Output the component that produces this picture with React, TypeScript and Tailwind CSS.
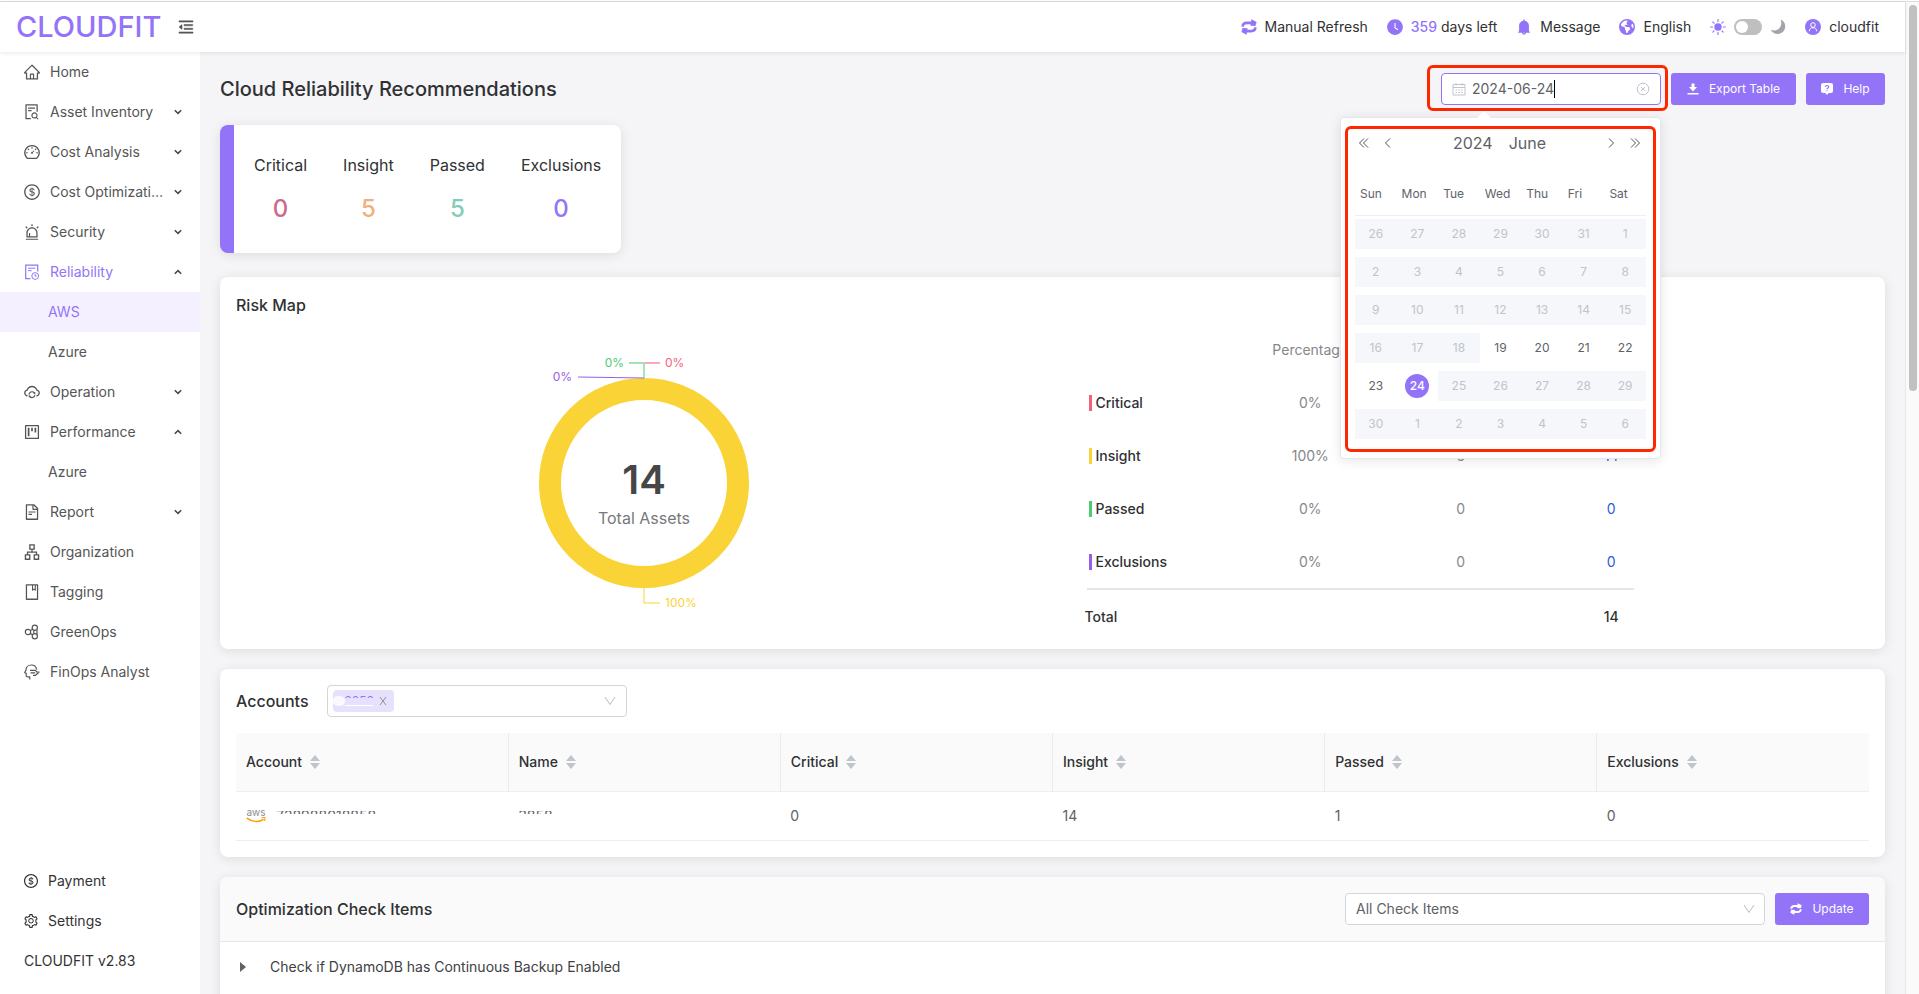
import type { ReactNode } from "react";
import {
  AiFillBell,
  AiFillClockCircle,
  AiOutlineAlert,
  AiOutlineApartment,
  AiOutlineBook,
  AiOutlineCloudSync,
  AiOutlineDashboard,
  AiOutlineDollarCircle,
  AiOutlineFileSearch,
  AiOutlineFileText,
  AiOutlineHome,
  AiOutlineMenuFold,
  AiOutlineProject,
  AiOutlineSetting,
} from "react-icons/ai";
import { FaEarthAmericas } from "react-icons/fa6";

type IconProps = { className?: string };

function RefreshIcon({ className }: IconProps) {
  return (
    <svg viewBox="0 0 16 16" className={className} fill="none" aria-hidden>
      <path
        d="M1.6 7.6C1.8 4.8 3.6 3.9 5.8 3.9H11"
        stroke="currentColor"
        strokeWidth="2.6"
      />
      <path d="M10.4 0.2 15.6 3 14.4 6.9 9.4 6.7z" fill="currentColor" />
      <path
        d="M14.4 8.4c-.2 2.8-2 3.7-4.2 3.7H5"
        stroke="currentColor"
        strokeWidth="2.6"
      />
      <path d="M5.6 15.8.4 13 1.6 9.1 6.6 9.3z" fill="currentColor" />
    </svg>
  );
}

function SunIcon() {
  return (
    <svg viewBox="0 0 16 16" className="size-4 text-[#9374f8]" aria-hidden>
      <circle cx="8" cy="8" r="3.7" fill="currentColor" />
      <path
        d="M8 .6v2M8 13.4v2M.6 8h2M13.4 8h2M2.8 2.8l1.3 1.3M11.9 11.9l1.3 1.3M2.8 13.2l1.3-1.3M11.9 4.1l1.3-1.3"
        stroke="currentColor"
        strokeWidth="1.2"
        strokeLinecap="round"
      />
    </svg>
  );
}

function MoonIcon() {
  return (
    <svg viewBox="0 0 16 16" className="size-4 text-[#a3a3ab]" aria-hidden>
      <path
        d="M10.6.6c2.6 1 4.6 3.4 4.6 6.6 0 4.4-3.4 7.8-7.6 7.8-3 0-5.6-1.6-6.9-4.2 1 .5 2.2.7 3.4.7 4 0 7.2-3.2 7.2-7.2 0-1.3-.2-2.6-.7-3.7z"
        fill="currentColor"
      />
    </svg>
  );
}

function UserIcon() {
  return (
    <svg viewBox="0 0 16 16" className="size-4" fill="none" aria-hidden>
      <circle cx="8" cy="8" r="8" fill="#9374f8" />
      <circle cx="8" cy="6" r="2.3" stroke="#fff" />
      <path d="M4.3 12.2c.2-2.3 1.7-3.6 3.7-3.6s3.5 1.3 3.7 3.6" stroke="#fff" />
    </svg>
  );
}

function FileClockIcon({ className }: IconProps) {
  return (
    <svg
      viewBox="-1 -1 18 18"
      className={className}
      fill="none"
      stroke="currentColor"
      aria-hidden
    >
      <path d="M6.5 14.7H1.7V1.2h12v6.3" strokeWidth="1.2" />
      <path d="M4 4.2h7.3M4 6.7h3.7" />
      <circle cx="11.2" cy="12" r="3.4" />
      <path d="M11.2 10v2.2h1.5" />
    </svg>
  );
}

function MoleculeIcon({ className }: IconProps) {
  return (
    <svg
      viewBox="-1 -1 18 18"
      className={className}
      fill="none"
      stroke="currentColor"
      strokeWidth="1.2"
      aria-hidden
    >
      <circle cx="4" cy="8" r="2.7" />
      <circle cx="10.8" cy="3.7" r="2.6" />
      <circle cx="10.8" cy="12.3" r="2.6" />
      <path d="M6.3 6.6 8.6 5.2M6.3 9.4l2.3 1.4M10.3 6.3c-1 1.2-1 2.3 0 3.4M13 5.2v5.6" />
    </svg>
  );
}

function AnalystIcon({ className }: IconProps) {
  return (
    <svg
      viewBox="-1 -1 18 18"
      className={className}
      fill="none"
      stroke="currentColor"
      strokeWidth="1.2"
      strokeLinejoin="round"
      aria-hidden
    >
      <path d="M12.6 5.6C12.3 2.9 10.2 1 7.3 1 4.3 1 2 3.2 2 6L.7 8.6l1.5.7v2.3c0 .8.5 1.2 1.2 1.2h2.4v2.7" />
      <path d="M6 6.3h5.3l1.7 1.9h2.5M6.5 8.8h4.7M9 11.3h2.6l1.6-1.7h1.3" />
    </svg>
  );
}

function ChevronIcon({ open = false }: { open?: boolean }) {
  return (
    <svg viewBox="0 0 8 6" className="h-1.5 w-2" fill="none" aria-hidden>
      <path
        d={open ? "M.8 4.8 4 1.6l3.2 3.2" : "M.8 1.2 4 4.4l3.2-3.2"}
        stroke="#4a4a4a"
        strokeWidth="1.6"
      />
    </svg>
  );
}

function SelectArrow() {
  return (
    <svg
      viewBox="0 0 12 10"
      className="pointer-events-none absolute right-2.5 top-1/2 h-2.5 w-3 -translate-y-1/2"
      fill="none"
      aria-hidden
    >
      <path d="M1 1l5 7.5L11 1" stroke="#b8bbc2" />
    </svg>
  );
}

function SortIcon() {
  return (
    <svg viewBox="0 0 10 14" className="h-3.5 w-2.5" fill="#c0c4cc" aria-hidden>
      <path d="M5 0l5 6H0zM5 14l5-6H0z" />
    </svg>
  );
}

const menu = [
  { label: "Home", icon: AiOutlineHome },
  { label: "Asset Inventory", icon: AiOutlineFileSearch, sub: [] },
  { label: "Cost Analysis", icon: AiOutlineDashboard, sub: [] },
  { label: "Cost Optimizati…", icon: AiOutlineDollarCircle, sub: [] },
  { label: "Security", icon: AiOutlineAlert, sub: [] },
  { label: "Reliability", icon: FileClockIcon, sub: ["AWS", "Azure"], active: true },
  { label: "Operation", icon: AiOutlineCloudSync, sub: [] },
  { label: "Performance", icon: AiOutlineProject, sub: ["Azure"] },
  { label: "Report", icon: AiOutlineFileText, sub: [] },
  { label: "Organization", icon: AiOutlineApartment },
  { label: "Tagging", icon: AiOutlineBook },
  { label: "GreenOps", icon: MoleculeIcon },
  { label: "FinOps Analyst", icon: AnalystIcon },
];

function Sidebar() {
  return (
    <nav className="flex w-[200px] shrink-0 flex-col bg-white text-sm text-[#555]">
      <ul>
        {menu.map(({ label, icon: Icon, sub, active }) => (
          <li key={label}>
            <a
              href="#"
              className={
                active
                  ? "flex h-10 items-center pl-[23px] pr-[18px] text-[#9374f8]"
                  : "flex h-10 items-center pl-[23px] pr-[18px]"
              }
            >
              <Icon className="size-[18px] shrink-0" />
              <span className="ml-[9px] whitespace-nowrap">{label}</span>
              {sub && (
                <span className="ml-auto">
                  <ChevronIcon open={sub.length > 0} />
                </span>
              )}
            </a>
            {sub?.map((item) => (
              <a
                key={item}
                href="#"
                className={
                  active && item === "AWS"
                    ? "flex h-10 items-center bg-[#f5f0ff] pl-12 text-[#9374f8]"
                    : "flex h-10 items-center pl-12"
                }
              >
                {item}
              </a>
            ))}
          </li>
        ))}
      </ul>
      <div className="mt-auto pb-[13px] text-[#333]">
        <a href="#" className="flex h-10 items-center gap-[9px] pl-[23px]">
          <AiOutlineDollarCircle className="size-4" />
          Payment
        </a>
        <a href="#" className="flex h-10 items-center gap-[9px] pl-[23px]">
          <AiOutlineSetting className="size-4" />
          Settings
        </a>
        <p className="flex h-10 items-center pl-6">CLOUDFIT v2.83</p>
      </div>
    </nav>
  );
}

function HeaderItem({ icon, children }: { icon: ReactNode; children: ReactNode }) {
  return (
    <button type="button" className="flex items-center gap-2">
      {icon}
      <span>{children}</span>
    </button>
  );
}

function Header() {
  return (
    <header className="z-10 flex h-[50px] shrink-0 items-center bg-white pl-4 pr-[26px] text-sm text-[#303133] shadow-[0_1px_4px_rgba(0,21,41,0.1)]">
      <span className="text-[29px] font-medium leading-8 text-[#9374f8]">CLOUDFIT</span>
      <button type="button" aria-label="Collapse menu" className="ml-4">
        <AiOutlineMenuFold className="size-[18px] text-[#555]" strokeWidth={30} />
      </button>
      <div className="ml-auto flex items-center gap-[19px]">
        <HeaderItem icon={<RefreshIcon className="size-4 text-[#9374f8]" />}>
          Manual Refresh
        </HeaderItem>
        <HeaderItem icon={<AiFillClockCircle className="-mx-px size-[18px] text-[#9374f8]" />}>
          <span className="font-medium text-[#9374f8]">359</span> days left
        </HeaderItem>
        <HeaderItem icon={<AiFillBell className="-mx-px size-[18px] text-[#9374f8]" />}>
          Message
        </HeaderItem>
        <HeaderItem icon={<FaEarthAmericas className="size-4 text-[#9374f8]" />}>
          English
        </HeaderItem>
        <label className="flex items-center gap-2">
          <SunIcon />
          <input
            type="checkbox"
            role="switch"
            aria-label="Dark mode"
            className="h-4 w-7 appearance-none rounded-full bg-[#bfbfbf] before:ml-0.5 before:mt-0.5 before:block before:size-3 before:rounded-full before:bg-white"
          />
          <MoonIcon />
        </label>
        <HeaderItem icon={<UserIcon />}>cloudfit</HeaderItem>
      </div>
    </header>
  );
}

const weekdays = ["Sun", "Mon", "Tue", "Wed", "Thu", "Fri", "Sat"];
const weeks = [
  [26, 27, 28, 29, 30, 31, 1],
  [2, 3, 4, 5, 6, 7, 8],
  [9, 10, 11, 12, 13, 14, 15],
  [16, 17, 18, 19, 20, 21, 22],
  [23, 24, 25, 26, 27, 28, 29],
  [30, 1, 2, 3, 4, 5, 6],
];

function Day({ week, day }: { week: number; day: number }) {
  const enabled = (week === 3 || week === 4) && day >= 19 && day <= 24;
  if (!enabled) {
    return (
      <button
        type="button"
        disabled
        className="block h-[30px] w-full bg-[#f5f7fa] text-[#c0c4cc]"
      >
        {day}
      </button>
    );
  }
  return (
    <button type="button" className="flex h-[30px] w-full items-center justify-center">
      <span
        className={
          day === 24
            ? "flex size-6 items-center justify-center rounded-full bg-[#9374f8] font-medium text-white"
            : "text-[#606266]"
        }
      >
        {day}
      </span>
    </button>
  );
}

function Arrow({ label, d }: { label: string; d: string }) {
  return (
    <button type="button" aria-label={label}>
      <svg viewBox="0 0 12 12" className="size-3" fill="none" stroke="#505256" aria-hidden>
        <path d={d} />
      </svg>
    </button>
  );
}

function Calendar() {
  return (
    <div className="absolute right-0 top-11 z-20 w-[321px] rounded border border-[#e4e7ed] bg-white pb-[15px] pl-3.5 pr-3.5 pt-2.5 text-[#606266] shadow-[0_2px_12px_rgba(0,0,0,0.1)]">
      <div className="absolute -top-[5px] left-[138px] size-2.5 rotate-45 bg-white" />
      <div className="flex h-[30px] items-center pl-[3px] pr-[5px]">
        <Arrow label="Previous year" d="M6 1.5 1.5 6 6 10.5M10 1.5 5.5 6l4.5 4.5" />
        <span className="w-3" />
        <Arrow label="Previous month" d="M8 1.5 3.5 6 8 10.5" />
        <div className="flex flex-1 justify-center gap-4 text-base">
          <span>2024</span>
          <span>June</span>
        </div>
        <Arrow label="Next month" d="M4 1.5 8.5 6 4 10.5" />
        <span className="w-3" />
        <Arrow label="Next year" d="M2 1.5 6.5 6 2 10.5M6 1.5 10.5 6 6 10.5" />
      </div>
      <table className="mt-4 w-full table-fixed text-xs">
        <thead>
          <tr className="h-[41px] border-b border-[#ebeef5]">
            {weekdays.map((d) => (
              <th key={d} className="pl-[5px] text-left font-normal">
                {d}
              </th>
            ))}
          </tr>
        </thead>
        <tbody>
          {weeks.map((days, week) => (
            <tr key={week} className="h-[38px]">
              {days.map((day) => (
                <td key={day} className="p-0">
                  <Day week={week} day={day} />
                </td>
              ))}
            </tr>
          ))}
        </tbody>
      </table>
      <div className="pointer-events-none absolute bottom-1.5 left-1 right-1 top-2 rounded-md border-[3px] border-[#ff2600]" />
    </div>
  );
}

function DatePicker() {
  return (
    <div className="relative w-[220px]">
      <div className="flex h-8 items-center rounded border border-[#9374f8] bg-white px-2.5 text-sm text-[#606266]">
        <svg viewBox="0 0 14 14" className="size-3.5" fill="none" stroke="#c0c4cc" aria-hidden>
          <path d="M1 2.5h12v10.5H1zM1 5.5h12M4 1v2.5M10 1v2.5" />
          <path d="M3.5 8h7M3.5 10.5h7" strokeDasharray="1.6 1.1" />
        </svg>
        <input
          type="text"
          aria-label="Date"
          defaultValue="2024-06-24"
          className="ml-1.5 field-sizing-content outline-none"
        />
        <span className="h-[18px] w-px bg-black" />
        <button type="button" aria-label="Clear date" className="ml-auto">
          <svg viewBox="0 0 14 14" className="size-3.5" fill="none" stroke="#c0c4cc" aria-hidden>
            <circle cx="7" cy="7" r="5.8" />
            <path d="M5 5l4 4M9 5l-4 4" />
          </svg>
        </button>
      </div>
      <div className="pointer-events-none absolute -bottom-1.5 -left-3.5 -right-[7px] -top-2 rounded-md border-[3px] border-[#ff2600]" />
      <Calendar />
    </div>
  );
}

const stats = [
  { label: "Critical", value: 0, color: "text-[#cc6b8e]" },
  { label: "Insight", value: 5, color: "text-[#efb27c]" },
  { label: "Passed", value: 5, color: "text-[#82cdb9]" },
  { label: "Exclusions", value: 0, color: "text-[#9374f8]" },
];

function Donut() {
  return (
    <svg viewBox="0 0 400 316" className="h-[316px] w-[400px]" fill="none">
      <circle cx="200" cy="166" r="94" stroke="#fad337" strokeWidth="22" />
      <path d="M200 61V46" stroke="#4bcb73" />
      <path d="M200 46h-15" stroke="#a0e3b5" strokeWidth="2" />
      <path d="M200 46h16" stroke="#f9a9b7" strokeWidth="2" />
      <path d="M200 61l-66-1" stroke="#9860e5" />
      <path d="M200 271v15h16" stroke="#fad337" />
      <g fontSize="12">
        <text x="180" y="50" textAnchor="end" fill="#4bcb73">0%</text>
        <text x="221" y="50" fill="#f2637b">0%</text>
        <text x="128" y="64" textAnchor="end" fill="#9860e5">0%</text>
        <text x="221" y="290" fill="#fad337">100%</text>
      </g>
      <text x="200" y="177" textAnchor="middle" fontSize="40" fontWeight="600" fill="#464646">14</text>
      <text x="200" y="207" textAnchor="middle" fontSize="16" fill="#77787c">Total Assets</text>
    </svg>
  );
}

const risks = [
  { label: "Critical", bar: "bg-[#f2637b]", percent: "0%", checks: 0, assets: 0 },
  { label: "Insight", bar: "bg-[#fad337]", percent: "100%", checks: 5, assets: 14 },
  { label: "Passed", bar: "bg-[#4bcb73]", percent: "0%", checks: 0, assets: 0 },
  { label: "Exclusions", bar: "bg-[#9860e5]", percent: "0%", checks: 0, assets: 0 },
];

function RiskTable() {
  return (
    <table className="ml-8 mt-1.5 w-full max-w-[602px] table-fixed text-center text-sm text-[#86878b]">
      <thead>
        <tr className="h-[53px]">
          <th />
          <th className="font-normal">Percentage</th>
          <th aria-label="Checks" />
          <th aria-label="Assets" />
        </tr>
      </thead>
      <tbody>
        {risks.map((r) => (
          <tr key={r.label} className="h-[53px]">
            <th className="text-left font-medium text-[#303133]">
              <span className="ml-1 flex items-center gap-1">
                <span className={`h-4 w-[3px] ${r.bar}`} />
                {r.label}
              </span>
            </th>
            <td>{r.percent}</td>
            <td>{r.checks}</td>
            <td>
              <a href="#" className="text-[#2f5bd8]">
                {r.assets}
              </a>
            </td>
          </tr>
        ))}
      </tbody>
      <tfoot className="font-medium text-[#303133]">
        <tr>
          <td colSpan={4} className="p-0">
            <hr className="ml-0.5 mr-[53px] border-t-2 border-[#e6e6e6]" />
          </td>
        </tr>
        <tr>
          <th className="pb-[5px] pt-[17px] text-left font-medium">Total</th>
          <td />
          <td />
          <td className="pb-[5px] pt-[17px]">14</td>
        </tr>
      </tfoot>
    </table>
  );
}

const columns = ["Account", "Name", "Critical", "Insight", "Passed", "Exclusions"];

function AccountsCard() {
  return (
    <section className="mt-5 rounded-lg bg-white p-4 shadow-[0_2px_12px_rgba(0,0,0,0.1)]">
      <div className="flex items-center">
        <label htmlFor="accounts" className="text-base font-medium text-[#303133]">
          Accounts
        </label>
        <div className="relative ml-[18px] flex h-8 w-[300px] items-center rounded border border-[#d4d5d9] pl-[5px]">
          <span className="flex h-[22px] w-[61px] items-center rounded bg-[#e8e1fd]">
            <span className="h-2.5 w-3 rounded-full bg-white/80" />
            <span className="h-2.5 w-7 border-b border-white">
              <span className="block h-0.5 overflow-hidden text-xs leading-[9px] text-[#9374f8]">
                2858
              </span>
            </span>
            <button type="button" aria-label="Remove account" className="ml-1.5">
              <svg viewBox="0 0 8 10" className="h-2.5 w-2" stroke="#909399" aria-hidden>
                <path d="M1 1l6 8M7 1 1 9" />
              </svg>
            </button>
          </span>
          <select id="accounts" className="h-full flex-1 appearance-none outline-none">
            <option value="" />
          </select>
          <SelectArrow />
        </div>
      </div>
      <table className="mt-4 w-full table-fixed text-left text-sm text-[#606266]">
        <thead className="bg-[#fafafa] text-[#303133]">
          <tr className="h-[58px] border-b border-[#ebeef5]">
            {columns.map((c) => (
              <th
                key={c}
                className="border-r border-[#ebebee] px-2.5 font-medium last:border-r-0"
              >
                <button type="button" className="flex items-center gap-2">
                  {c}
                  <SortIcon />
                </button>
              </th>
            ))}
          </tr>
        </thead>
        <tbody>
          <tr className="h-[49px] border-b border-[#ebeef5]">
            <td className="px-2.5">
              <div className="flex items-center gap-2.5">
                <span className="flex w-5 flex-col items-center">
                  <span className="text-[10px] leading-[9px] text-[#8a8d93]">aws</span>
                  <svg viewBox="0 0 20 6" className="h-1.5 w-5" fill="none" aria-hidden>
                    <path d="M.8 1.2C5.5 5 13 5.5 17.5 2.3" stroke="#f90" strokeWidth="1.5" />
                    <path d="M15.5.8l3.7-.2-.7 3.4" stroke="#f90" />
                  </svg>
                </span>
                <span className="mb-1.5 h-[3px] overflow-hidden leading-[9px]">
                  728988018858
                </span>
              </div>
            </td>
            <td className="px-2.5">
              <span className="mb-1.5 block h-[3px] overflow-hidden leading-[9px]">3858</span>
            </td>
            <td className="px-2.5">0</td>
            <td className="px-2.5">14</td>
            <td className="px-2.5">1</td>
            <td className="px-2.5">0</td>
          </tr>
        </tbody>
      </table>
    </section>
  );
}

function CheckItems() {
  return (
    <section className="mt-5 min-h-64 shrink-0 overflow-hidden rounded-lg bg-white shadow-[0_2px_12px_rgba(0,0,0,0.1)]">
      <div className="flex h-[65px] items-center border-b border-[#e6e6ea] bg-[#fafafa] px-4">
        <h2 className="text-base font-medium text-[#303133]">Optimization Check Items</h2>
        <div className="relative ml-auto w-[420px]">
          <select
            aria-label="Check items"
            className="h-8 w-full appearance-none rounded border border-[#d4d5d9] bg-white px-2.5 text-sm text-[#606266]"
          >
            <option>All Check Items</option>
          </select>
          <SelectArrow />
        </div>
        <button
          type="button"
          className="ml-2.5 flex h-8 w-[94px] items-center justify-center gap-2.5 rounded-[3px] bg-[#9374f8] text-xs text-white"
        >
          <RefreshIcon className="size-3" />
          Update
        </button>
      </div>
      <button
        type="button"
        className="flex h-[50px] w-full items-center px-5 text-sm text-[#404144]"
      >
        <svg viewBox="0 0 6 10" className="h-2.5 w-1.5" fill="#606266" aria-hidden>
          <path d="M0 0l6 5-6 5z" />
        </svg>
        <span className="ml-6">Check if DynamoDB has Continuous Backup Enabled</span>
      </button>
    </section>
  );
}

export default function App() {
  return (
    <div className="flex h-screen flex-col overflow-hidden bg-white font-['Inter',sans-serif]">
      <div className="mt-px border-t border-[#dcdcdc]" />
      <div className="flex min-h-0 flex-1">
        <div className="flex min-w-0 flex-1 flex-col">
          <Header />
          <div className="flex min-h-0 flex-1">
            <Sidebar />
            <main className="flex min-w-0 flex-1 flex-col overflow-hidden bg-[#f5f5f8] px-5 pt-[21px]">
              <div className="flex h-8 items-center gap-2.5">
                <h1 className="mr-auto text-xl font-medium text-[#303133]">
                  Cloud Reliability Recommendations
                </h1>
                <DatePicker />
                <button
                  type="button"
                  className="flex h-8 w-[125px] items-center justify-center gap-2.5 rounded-[3px] bg-[#9374f8] text-xs text-white"
                >
                  <svg viewBox="0 0 12 12" className="size-3" fill="currentColor" aria-hidden>
                    <path d="M4.5.5h3V4H10L6 8.5 2 4h2.5zM.5 10h11v1.5H.5z" />
                  </svg>
                  Export Table
                </button>
                <button
                  type="button"
                  className="flex h-8 w-[79px] items-center justify-center gap-2.5 rounded-[3px] bg-[#9374f8] text-xs text-white"
                >
                  <svg viewBox="0 0 12 12" className="size-3" fill="none" aria-hidden>
                    <rect width="12" height="10" rx="2" fill="#fff" />
                    <path d="M4 9.5h4L6 12z" fill="#fff" />
                    <path
                      d="M4.5 4c0-2 3.2-2 3.2 0C7.7 5 6 5 6 6.2M6 7.2v1"
                      stroke="#9374f8"
                      strokeWidth="1.2"
                    />
                  </svg>
                  Help
                </button>
              </div>
              <section className="mt-5 flex w-fit rounded-lg border-l-[14px] border-[#9374f8] bg-white shadow-[0_2px_12px_rgba(0,0,0,0.1)]">
                <dl className="flex h-32 items-center gap-9 px-5 text-center">
                  {stats.map((s) => (
                    <div key={s.label}>
                      <dt className="text-base text-[#303133]">{s.label}</dt>
                      <dd className={`mt-4 text-2xl font-medium ${s.color}`}>{s.value}</dd>
                    </div>
                  ))}
                </dl>
              </section>
              <section className="mt-6 rounded-lg bg-white p-4 shadow-[0_2px_12px_rgba(0,0,0,0.1)]">
                <h2 className="text-base font-medium text-[#303133]">Risk Map</h2>
                <div className="grid grid-cols-2">
                  <div className="flex justify-center">
                    <Donut />
                  </div>
                  <div>
                    <RiskTable />
                  </div>
                </div>
              </section>
              <AccountsCard />
              <CheckItems />
            </main>
          </div>
        </div>
        <div className="w-3.5 shrink-0 border-l border-[#e8e8e8] bg-[#fafafa] px-[3px] pt-[3px]">
          <div className="h-[39%] w-2 rounded-full bg-[#c1c1c1]" />
        </div>
      </div>
    </div>
  );
}
